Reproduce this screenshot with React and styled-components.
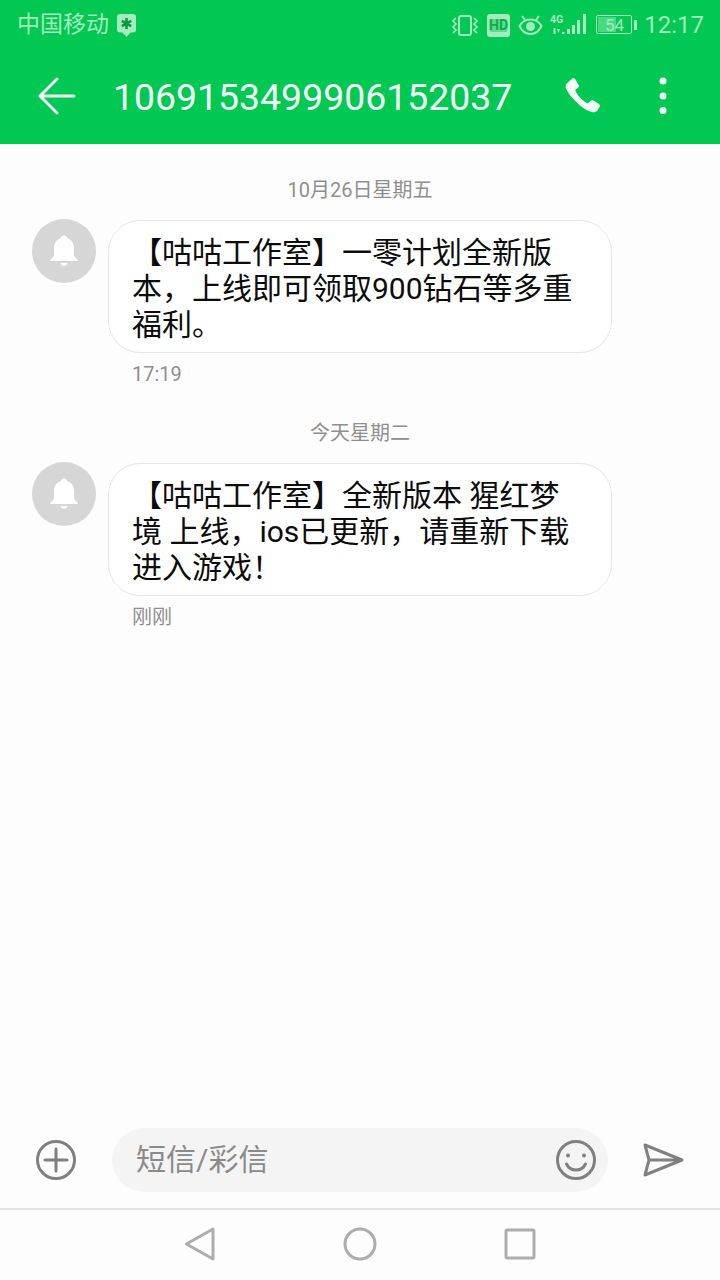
import React from 'react';
import styled, { createGlobalStyle } from 'styled-components';

const GlobalStyle = createGlobalStyle`
  html, body { margin: 0; padding: 0; background: #fdfdfd; }
  body { font-family: Roboto, "Noto Sans CJK SC", sans-serif; }
`;

const Screen = styled.div`
  width: 720px;
  height: 1280px;
  display: flex;
  flex-direction: column;
  overflow: hidden;
  background: #fdfdfd;
`;

const Header = styled.header`
  background: #00c853;
  height: 144px;
  display: flex;
  flex-direction: column;
`;

const StatusBar = styled.div`
  height: 48px;
  display: flex;
  align-items: center;
  padding: 2px 16px 0 17px;
  box-sizing: border-box;
  color: #a6ebbe;
`;

const Carrier = styled.span`
  font-size: 23px;
  line-height: 48px;
  margin-right: 8px;
`;

const StatusIcons = styled.div`
  margin-left: auto;
  display: flex;
  align-items: center;
`;

const StatusIcon = styled.svg`
  display: block;
  flex: none;
  margin-left: ${(p) => p.$gap || 0}px;
`;

const Clock = styled.span`
  font-size: 24px;
  line-height: 48px;
  margin-left: 6px;
`;

const Toolbar = styled.div`
  height: 96px;
  display: flex;
  align-items: center;
  color: #fff;
`;

const Title = styled.h1`
  margin: 2px 0 0 37px;
  font-size: 37.4px;
  font-weight: 400;
  line-height: 48px;
  color: #f4fff8;
`;

const ToolIcon = styled.svg`
  display: block;
  flex: none;
  margin-left: ${(p) => p.$gap || 0}px;
`;

const Thread = styled.main`
  flex: 1;
  padding: 32px 0 0;
  display: flex;
  flex-direction: column;
`;

const DateLabel = styled.div`
  font-size: 20px;
  line-height: 28px;
  color: #8f8f8f;
  text-align: center;
  margin-bottom: 15px;
`;

const MessageRow = styled.div`
  display: flex;
  align-items: flex-start;
  padding-left: 32px;
`;

const Avatar = styled.div`
  width: 64px;
  height: 64px;
  border-radius: 50%;
  background: #d6d6d6;
  display: flex;
  align-items: center;
  justify-content: center;
  flex: none;
`;

const Bubble = styled.div`
  margin: 1px 0 0 12px;
  width: 504px;
  height: 133px;
  box-sizing: border-box;
  padding: 14px 10px 0 23px;
  background: #fff;
  border: 1px solid #e6e6e6;
  border-radius: 32px;
  font-size: 30px;
  line-height: 36px;
  color: #0c0c0c;
`;

const BubbleLine = styled.div`
  white-space: pre;
`;

const SentAt = styled.div`
  margin: 7px 0 31px 132px;
  font-size: 20px;
  line-height: 28px;
  color: #8f8f8f;
`;

const Composer = styled.div`
  height: 80px;
  flex: none;
  display: flex;
  align-items: flex-start;
  padding-left: 36px;
`;

const RoundIconSvg = styled.svg`
  display: block;
  flex: none;
  margin-top: 12px;
`;

const InputPill = styled.div`
  margin-left: 36px;
  width: 496px;
  height: 64px;
  border-radius: 32px;
  background: #f4f4f4;
  display: flex;
  align-items: center;
  padding: 0 12px 0 24px;
  box-sizing: border-box;
`;

const Placeholder = styled.span`
  font-size: 30px;
  line-height: 40px;
  color: #8a8a8a;
`;

const SmileyIcon = styled.svg`
  display: block;
  margin-left: auto;
`;

const SendIcon = styled.svg`
  display: block;
  flex: none;
  margin: 15px 0 0 34px;
`;

const NavBar = styled.nav`
  height: 72px;
  flex: none;
  border-top: 2px solid #e4e4e4;
  box-sizing: border-box;
  display: flex;
  align-items: center;
  justify-content: center;
  gap: 127px;
  padding-bottom: 3px;
`;

const messages = [
  {
    date: '10月26日星期五',
    lines: ['【咕咕工作室】一零计划全新版', '本，上线即可领取900钻石等多重', '福利。'],
    time: '17:19',
  },
  {
    date: '今天星期二',
    lines: ['【咕咕工作室】全新版本 猩红梦', '境 上线，ios已更新，请重新下载', '进入游戏！'],
    time: '刚刚',
  },
];

const BellAvatar = () => (
  <Avatar>
    <svg width="32" height="34" viewBox="0 0 32 34">
      <path
        d="M16 1.5c1.700 0 3 1.200 3.200 2.800 4.400 1.300 6.800 5 6.800 9.700v6.200c0 1.600 1 2.800 2.400 4.200.9.900 1.600 1.600 1.600 2.600H2c0-1 .7-1.700 1.600-2.600C5 23 6 21.800 6 20.200V14c0-4.700 2.400-8.400 6.800-9.700C13 2.700 14.300 1.500 16 1.500z"
        fill="#fff"
      />
      <path d="M12.500 29h7c-.4 1.800-1.800 3-3.500 3s-3.100-1.200-3.500-3z" fill="#fff" />
    </svg>
  </Avatar>
);

export default function App() {
  return (
    <Screen>
      <GlobalStyle />
      <Header>
        <StatusBar>
          <Carrier>中国移动</Carrier>
          {/* chat notification badge */}
          <svg width="19" height="23" viewBox="0 0 19 23">
            <path d="M3 0h13a3 3 0 0 1 3 3v12.500a3 3 0 0 1-3 3h-2.500L9.500 23l-4-4.500H3a3 3 0 0 1-3-3V3a3 3 0 0 1 3-3z" fill="#a6ebbe" />
            <path d="M9.500 4v11M4.800 6.800l9.400 5.400M14.200 6.800l-9.400 5.400" stroke="#0a9a46" strokeWidth="2.600" />
          </svg>
          <StatusIcons>
            {/* vibrate */}
            <StatusIcon width="28" height="24" viewBox="0 0 28 24" fill="none" stroke="#a6ebbe" strokeWidth="2">
              <rect x="8" y="3" width="12" height="19" rx="2" />
              <path d="M5 5 L2 8 L5 11 L2 14 L5 17 L2 20" strokeWidth="1.700" />
              <path d="M23 5 L26 8 L23 11 L26 14 L23 17 L26 20" strokeWidth="1.700" />
            </StatusIcon>
            {/* HD badge */}
            <StatusIcon $gap={8} width="23" height="23" viewBox="0 0 23 23">
              <rect x="0" y="0" width="23" height="23" rx="3" fill="#a6ebbe" />
              <rect x="2.500" y="5" width="18" height="13" rx="2" fill="#5fd98a" />
              <text x="11.500" y="16.300" textAnchor="middle" fontSize="14" fontWeight="700" fontFamily="Roboto, sans-serif" fill="#06b04b">HD</text>
            </StatusIcon>
            {/* eye comfort */}
            <StatusIcon $gap={8} width="25" height="22" viewBox="0 0 25 22" fill="none" stroke="#a6ebbe" strokeWidth="2">
              <path d="M1.500 12C4 7.500 8 5.500 12.500 5.500S21 7.500 23.500 12C21 17.500 17 20 12.500 20S4 17.500 1.500 12z" />
              <circle cx="12.500" cy="12.500" r="3.500" fill="#a6ebbe" />
              <path d="M4 2l3 4M21 2l-3 4" />
            </StatusIcon>
            {/* 4G and signal */}
            <StatusIcon $gap={7} width="37" height="24" viewBox="0 0 37 24" fill="#a6ebbe">
              <text x="0" y="10" fontSize="10.500" fontWeight="700" fontFamily="Roboto, sans-serif">4G</text>
              <rect x="3.500" y="15" width="2" height="6" />
              <path d="M7 16h3l-1.500 4z" />
              <rect x="12" y="19" width="2.500" height="2" />
              <rect x="17" y="16" width="3" height="5" />
              <rect x="22" y="12" width="3" height="9" />
              <rect x="27" y="7" width="3" height="14" />
              <rect x="33" y="1" width="3" height="20" />
            </StatusIcon>
            {/* battery with level */}
            <StatusIcon $gap={9} width="42" height="22" viewBox="0 0 42 22">
              <rect x=".5" y="1.500" width="35" height="18" rx="1.500" fill="none" stroke="#a6ebbe" />
              <rect x="2" y="3" width="18" height="15" fill="#a6ebbe" opacity=".45" />
              <rect x="38" y="6" width="3" height="10" fill="#a6ebbe" />
              <text x="9" y="16.500" fontSize="17" fontFamily="Roboto, sans-serif" fill="#a6ebbe">54</text>
            </StatusIcon>
            <Clock>12:17</Clock>
          </StatusIcons>
        </StatusBar>
        <Toolbar>
          {/* back arrow */}
          <ToolIcon $gap={38} width="38" height="38" viewBox="0 0 38 38" fill="none" stroke="#f4fff8" strokeWidth="3" strokeLinecap="round" strokeLinejoin="round">
            <path d="M36 19H2M19 2L2 19l17 17" />
          </ToolIcon>
          <Title>1069153499906152037</Title>
          {/* phone handset */}
          <ToolIcon $gap={52} width="38" height="37" viewBox="2 1 36 36">
            <path
              d="M9.500 1.500c1.200-.7 2.300-.3 3 .7l3.200 5.500c.6 1 .4 2-.5 2.800l-2.800 2.300c1.500 3.200 3.500 6 6 8.500 2.400 2.400 4.400 3.700 6.200 4.600l2.700-2.600c.8-.8 1.900-1 2.900-.4l5.200 3.300c1 .7 1.300 1.800.7 2.900l-2 3.200c-1 1.500-2.700 2.400-4.700 2-5-1-10.500-4.500-15.500-9.500S5.500 16 3.500 11.500c-.8-2-.5-3.900 1-5.400z"
              fill="#f4fff8"
            />
          </ToolIcon>
          {/* overflow menu */}
          <ToolIcon $gap={57} width="8" height="38" viewBox="0 0 8 38" fill="#f4fff8">
            <circle cx="4" cy="4" r="3.500" />
            <circle cx="4" cy="19" r="3.500" />
            <circle cx="4" cy="33.500" r="3.500" />
          </ToolIcon>
        </Toolbar>
      </Header>

      <Thread>
        {messages.map((m) => (
          <React.Fragment key={m.date}>
            <DateLabel>{m.date}</DateLabel>
            <MessageRow>
              <BellAvatar />
              <Bubble>
                {m.lines.map((line) => (
                  <BubbleLine key={line}>{line}</BubbleLine>
                ))}
              </Bubble>
            </MessageRow>
            <SentAt>{m.time}</SentAt>
          </React.Fragment>
        ))}
      </Thread>

      <Composer>
        {/* attachment */}
        <RoundIconSvg width="40" height="40" viewBox="0 0 40 40" fill="none" stroke="#808080" strokeWidth="3" strokeLinecap="round">
          <circle cx="20" cy="20" r="18.500" />
          <path d="M20 9v22M9 20h22" />
        </RoundIconSvg>
        <InputPill>
          <Placeholder>短信/彩信</Placeholder>
          <SmileyIcon width="40" height="40" viewBox="0 0 40 40" fill="none" stroke="#808080" strokeWidth="3" strokeLinecap="round">
            <circle cx="20" cy="20" r="18.500" />
            <circle cx="12" cy="15.500" r="2" fill="#808080" stroke="none" />
            <circle cx="28" cy="15.500" r="2" fill="#808080" stroke="none" />
            <path d="M10.500 24c2 4 5.500 6 9.500 6s7.500-2 9.500-6" />
          </SmileyIcon>
        </InputPill>
        <SendIcon width="42" height="34" viewBox="0 0 42 34" fill="none" stroke="#808080" strokeWidth="3" strokeLinejoin="round" strokeLinecap="round">
          <path d="M3 2l37 15L3 32l4-15zM7 17h33" />
        </SendIcon>
      </Composer>

      <NavBar>
        <svg width="32" height="34" viewBox="0 0 32 34" fill="none" stroke="#adadad" strokeWidth="3" strokeLinejoin="round">
          <path d="M29 2L2.500 17 29 32z" />
        </svg>
        <svg width="34" height="34" viewBox="0 0 34 34" fill="none" stroke="#adadad" strokeWidth="3">
          <circle cx="17" cy="17" r="15" />
        </svg>
        <svg width="32" height="32" viewBox="0 0 32 32" fill="none" stroke="#adadad" strokeWidth="3" strokeLinejoin="round">
          <rect x="2" y="2" width="28" height="28" rx="1" />
        </svg>
      </NavBar>
    </Screen>
  );
}
